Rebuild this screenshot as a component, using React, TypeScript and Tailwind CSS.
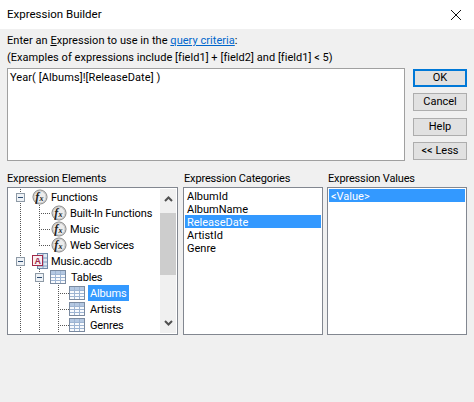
const font = "font-['Roboto','Noto_Sans',sans-serif]";

function Expander() {
  return (
    <svg width="9" height="9" viewBox="0 0 9 9" className="block">
      <rect x="0.5" y="0.5" width="8" height="8" fill="#eef2f6" stroke="#8e9aa6" />
      <rect x="2" y="4" width="5" height="1" fill="#2a4a70" />
    </svg>
  );
}

function FxIcon() {
  return (
    <svg width="16" height="16" viewBox="0 0 16 16" className="block">
      <circle cx="8" cy="8" r="7" fill="#ececec" stroke="#7c7c7c" />
      <circle cx="8" cy="8" r="6" fill="none" stroke="#c8c8c8" />
      <text x="3.2" y="11.5" fontFamily="Liberation Serif" fontStyle="italic" fontWeight="700" fontSize="12" fill="#222">
        f
      </text>
      <text x="7.6" y="12" fontFamily="Liberation Serif" fontStyle="italic" fontWeight="700" fontSize="8" fill="#222">
        x
      </text>
    </svg>
  );
}

function TableIcon() {
  return (
    <svg width="18" height="14" viewBox="0 0 18 14" className="block">
      <rect x="0.5" y="0.5" width="15" height="13" fill="#f8fafd" stroke="#7a8aa0" />
      <rect x="1" y="1" width="14" height="3" fill="#b4c8e2" />
      <path d="M1 4.5H15M1 7.5H15M1 10.5H15M5.5 1V13M10.5 1V13" stroke="#9db4d2" fill="none" />
    </svg>
  );
}

function AccessIcon() {
  return (
    <svg width="16" height="16" viewBox="0 0 16 16" className="block">
      <rect x="5.5" y="0.5" width="10" height="15" fill="#dfe8f2" stroke="#6f88a8" />
      <path d="M6 5H15M6 9H15M6 13H15M11 1V15" stroke="#7f9ac0" fill="none" />
      <rect x="0.5" y="2.5" width="10" height="10" fill="#f9eef2" stroke="#a02848" />
      <text x="2.5" y="11" fontFamily="Liberation Sans" fontWeight="700" fontSize="9" fill="#a02848">
        A
      </text>
    </svg>
  );
}

// guides: x of dotted verticals, elbow: [x, endX] of the dotted branch
function Row({
  guides = [],
  elbow,
  last,
  expanderX,
  iconX,
  icon,
  label,
  selected,
}: {
  guides?: number[];
  elbow?: [number, number];
  last?: boolean;
  expanderX?: number;
  iconX: number;
  icon: React.ReactNode;
  label: string;
  selected?: boolean;
}) {
  return (
    <div className="relative h-4 shrink-0">
      <svg width="155" height="16" className="absolute left-0 top-0">
        {guides.map((x) => (
          <line key={x} x1={x + 0.5} x2={x + 0.5} y1="0" y2="16" stroke="#555" strokeDasharray="1 1" />
        ))}
        {elbow && (
          <>
            <line x1={elbow[0] + 0.5} x2={elbow[0] + 0.5} y1="0" y2={last ? 8 : 16} stroke="#555" strokeDasharray="1 1" />
            <line x1={elbow[0]} x2={elbow[1]} y1="8.5" y2="8.5" stroke="#555" strokeDasharray="1 1" />
          </>
        )}
      </svg>
      {expanderX !== undefined && (
        <div className="absolute top-[4px]" style={{ left: expanderX }}>
          <Expander />
        </div>
      )}
      <div className="absolute top-0 flex h-4 items-center" style={{ left: iconX }}>
        {icon}
        <span
          className={`ml-[1px] h-4 px-[2px] text-[11px] leading-[18px] tracking-[-0.15px] whitespace-nowrap ${
            selected ? "bg-[#3399ff] text-white" : "text-black"
          }`}
        >
          {label}
        </span>
      </div>
    </div>
  );
}

function Tree() {
  return (
    <div className="flex h-[148px] w-[172px] border border-[#828790] bg-white">
      <div className="flex flex-1 flex-col overflow-hidden pt-[1px]">
        <Row guides={[12]} expanderX={8} iconX={24} icon={<FxIcon />} label="Functions" />
        <Row guides={[12]} elbow={[31, 43]} iconX={43} icon={<FxIcon />} label="Built-In Functions" />
        <Row guides={[12]} elbow={[31, 43]} iconX={43} icon={<FxIcon />} label="Music" />
        <Row guides={[12]} elbow={[31, 43]} last iconX={43} icon={<FxIcon />} label="Web Services" />
        <Row guides={[12]} expanderX={8} iconX={24} icon={<AccessIcon />} label="Music.accdb" />
        <Row guides={[12, 31]} expanderX={27} iconX={42} icon={<TableIcon />} label="Tables" />
        <Row guides={[12, 31]} elbow={[50, 61]} iconX={61} icon={<TableIcon />} label="Albums" selected />
        <Row guides={[12, 31]} elbow={[50, 61]} iconX={61} icon={<TableIcon />} label="Artists" />
        <Row guides={[12, 31]} elbow={[50, 61]} iconX={61} icon={<TableIcon />} label="Genres" />
      </div>
      <div className="my-[1px] mr-[1px] flex w-[16px] shrink-0 flex-col bg-[#f0f0f0]">
        <div className="flex h-[24px] items-center justify-center pb-[4px]">
          <svg width="9" height="6" viewBox="0 0 9 6">
            <path d="M1 5L4.5 1.5L8 5" fill="none" stroke="#505050" strokeWidth="2" />
          </svg>
        </div>
        <div className="h-[62px] bg-[#cdcdcd]" />
        <div className="flex-1" />
        <div className="flex h-[20px] items-center justify-center">
          <svg width="9" height="6" viewBox="0 0 9 6">
            <path d="M1 1L4.5 4.5L8 1" fill="none" stroke="#505050" strokeWidth="2" />
          </svg>
        </div>
      </div>
    </div>
  );
}

function ListBox({ items, selected }: { items: string[]; selected: string }) {
  return (
    <div className="h-[148px] w-[140px] border border-[#828790] bg-white p-[1px]">
      {items.map((item) => (
        <div
          key={item}
          className={`h-[13px] px-[2px] text-[11px] leading-[15px] whitespace-nowrap ${
            item === selected ? "bg-[#3399ff] text-white" : "text-black"
          }`}
        >
          {item}
        </div>
      ))}
    </div>
  );
}

function Btn({ label, primary, mt }: { label: string; primary?: boolean; mt: string }) {
  return (
    <div
      className={`flex h-[18px] w-[54px] items-center justify-center bg-[#e1e1e1] pt-[1px] text-[11px] text-black ${mt} ${
        primary ? "border-2 border-[#0078d7]" : "border border-[#adadad]"
      }`}
    >
      {label}
    </div>
  );
}

export default function App() {
  return (
    <div className={`flex h-[402px] w-[474px] flex-col overflow-hidden bg-[#f0f0f0] ${font}`}>
      <div className="flex h-[29px] shrink-0 items-center justify-between bg-white pl-[7px] pr-[2px] text-[11.5px] text-black">
        <span>Expression Builder</span>
        <svg width="32" height="26" viewBox="0 0 32 26">
          <path d="M11 8L21 18M21 8L11 18" stroke="#111" strokeWidth="1" fill="none" />
        </svg>
      </div>

      <div className="px-[7px] pt-[3px]">
        <p className="h-[17px] text-[11px] leading-[17px] tracking-[0.04px] whitespace-nowrap text-black">
          Enter an <span className="underline">E</span>xpression to use in the{" "}
          <span className="text-[#0066cc] underline">query criteria</span>:
        </p>
        <p className="h-[17px] text-[11px] leading-[17px] tracking-[0.04px] whitespace-nowrap text-black">
          (Examples of expressions include [field1] + [field2] and [field1] &lt; 5)
        </p>

        <div className="mt-[2px] flex">
          <div className="h-[93px] w-[398px] border border-[#a0a0a0] bg-white px-[2px] text-[11px] leading-[18px] tracking-[0.08px] text-black">
            Year( [Albums]![ReleaseDate] )
          </div>
          <div className="ml-[8px] flex flex-col pt-[1px]">
            <Btn label="OK" primary mt="" />
            <Btn label="Cancel" mt="mt-[6px]" />
            <Btn label="Help" mt="mt-[7px]" />
            <Btn label="<< Less" mt="mt-[6px]" />
          </div>
        </div>

        <div className="mt-[9px] flex h-[17px] text-[11px] leading-[18px] tracking-[-0.15px] text-black">
          <span className="w-[177px]">Expression Elements</span>
          <span className="w-[144px]">Expression Categories</span>
          <span>Expression Values</span>
        </div>

        <div className="flex">
          <Tree />
          <div className="ml-[5px]">
            <ListBox items={["AlbumId", "AlbumName", "ReleaseDate", "ArtistId", "Genre"]} selected="ReleaseDate" />
          </div>
          <div className="ml-[4px]">
            <ListBox items={["<Value>"]} selected="<Value>" />
          </div>
        </div>
      </div>
    </div>
  );
}
